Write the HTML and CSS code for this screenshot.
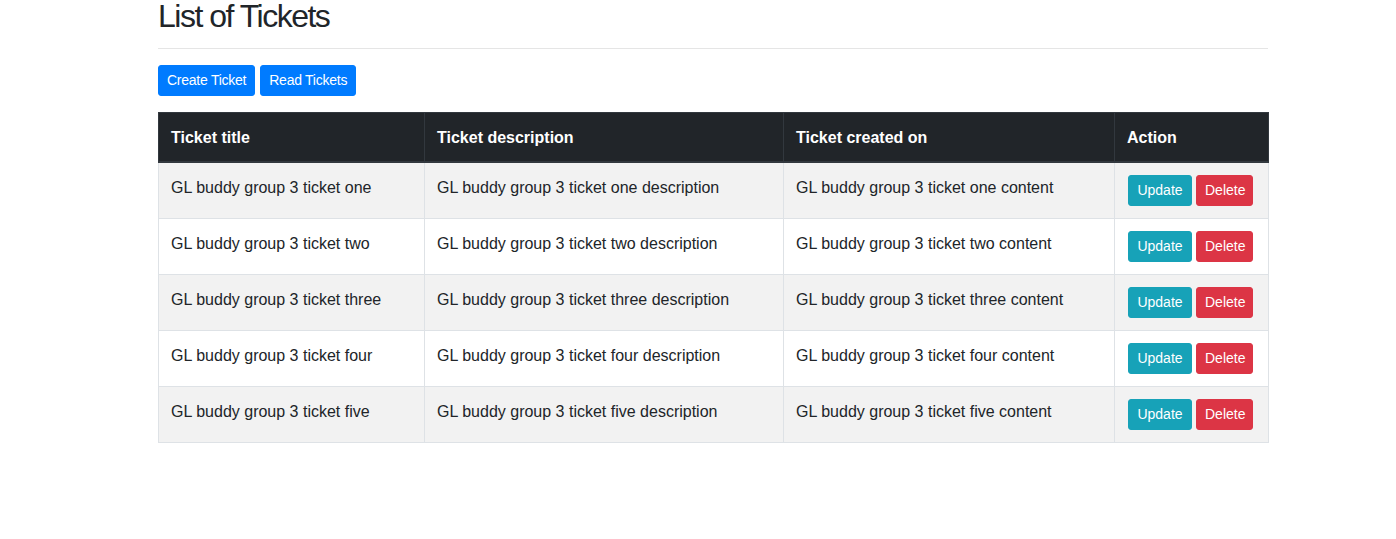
FILE: index.html
```html
<!DOCTYPE html>
<html lang="en">
<head>
<meta charset="utf-8">
<title>List of Tickets</title>
<link rel="stylesheet" href="styles.css">
</head>
<body>
<div class="container">
  <h2 class="title">List of Tickets</h2>
  <hr class="divider">
  <div class="toolbar">
    <button class="btn btn-primary">Create Ticket</button>
    <button class="btn btn-primary">Read Tickets</button>
  </div>
  <table class="table">
    <colgroup>
      <col class="c1"><col class="c2"><col class="c3"><col class="c4">
    </colgroup>
    <thead>
      <tr><th>Ticket title</th><th>Ticket description</th><th>Ticket created on</th><th>Action</th></tr>
    </thead>
    <tbody>
      <tr><td>GL buddy group 3 ticket one</td><td>GL buddy group 3 ticket one description</td><td>GL buddy group 3 ticket one content</td><td class="actions"><button class="btn btn-info">Update</button><button class="btn btn-danger">Delete</button></td></tr>
      <tr><td>GL buddy group 3 ticket two</td><td>GL buddy group 3 ticket two description</td><td>GL buddy group 3 ticket two content</td><td class="actions"><button class="btn btn-info">Update</button><button class="btn btn-danger">Delete</button></td></tr>
      <tr><td>GL buddy group 3 ticket three</td><td>GL buddy group 3 ticket three description</td><td>GL buddy group 3 ticket three content</td><td class="actions"><button class="btn btn-info">Update</button><button class="btn btn-danger">Delete</button></td></tr>
      <tr><td>GL buddy group 3 ticket four</td><td>GL buddy group 3 ticket four description</td><td>GL buddy group 3 ticket four content</td><td class="actions"><button class="btn btn-info">Update</button><button class="btn btn-danger">Delete</button></td></tr>
      <tr><td>GL buddy group 3 ticket five</td><td>GL buddy group 3 ticket five description</td><td>GL buddy group 3 ticket five content</td><td class="actions"><button class="btn btn-info">Update</button><button class="btn btn-danger">Delete</button></td></tr>
    </tbody>
  </table>
</div>
</body>
</html>
```

FILE: styles.css
```css
* { box-sizing: border-box; }
html, body { margin: 0; padding: 0; background: #fff; }
body {
  font-family: "Liberation Sans", Arial, sans-serif;
  font-size: 16px;
  line-height: 1.5;
  color: #212529;
}
.container {
  width: 1110px;
  margin-left: 158px;
}
.title {
  margin: 0;
  font-size: 32px;
  font-weight: 500;
  line-height: 32px;
  letter-spacing: -1.5px;
  color: #212529;
}
.divider {
  margin: 16px 0;
  border: 0;
  border-top: 1px solid rgba(0,0,0,.1);
  height: 0;
}
.toolbar {
  margin-bottom: 16px;
  display: flex;
  gap: 5px;
}
.toolbar .btn { letter-spacing: -0.25px; }
.btn {
  display: inline-block;
  font-family: inherit;
  font-size: 14px;
  line-height: 1.5;
  padding: 4px 8px;
  border: 1px solid transparent;
  border-radius: 3px;
  color: #fff;
  cursor: pointer;
}
.btn-primary { background: #007bff; border-color: #007bff; }
.btn-info { background: #17a2b8; border-color: #17a2b8; }
.btn-danger { background: #dc3545; border-color: #dc3545; }
.table {
  width: 1110px;
  table-layout: fixed;
  border-collapse: collapse;
  margin-bottom: 16px;
}
.c1 { width: 266px; }
.c2 { width: 359px; }
.c3 { width: 331px; }
.c4 { width: 154px; }
.table th, .table td {
  padding: 13px 12px 11px;
  text-align: left;
  vertical-align: top;
  border: 1px solid #dee2e6;
  white-space: nowrap;
}
.table td.actions {
  padding: 12px 12px 12px 13px;
}
.actions .btn-info { margin-right: 4px; width: 64px; }
.actions .btn-danger { width: 57px; }
.table thead th {
  background: #212529;
  color: #fff;
  font-weight: 700;
  border-color: #32383e;
  border-bottom-width: 2px;
}
.table tbody tr:nth-child(odd) { background: rgba(0,0,0,.05); }
```
